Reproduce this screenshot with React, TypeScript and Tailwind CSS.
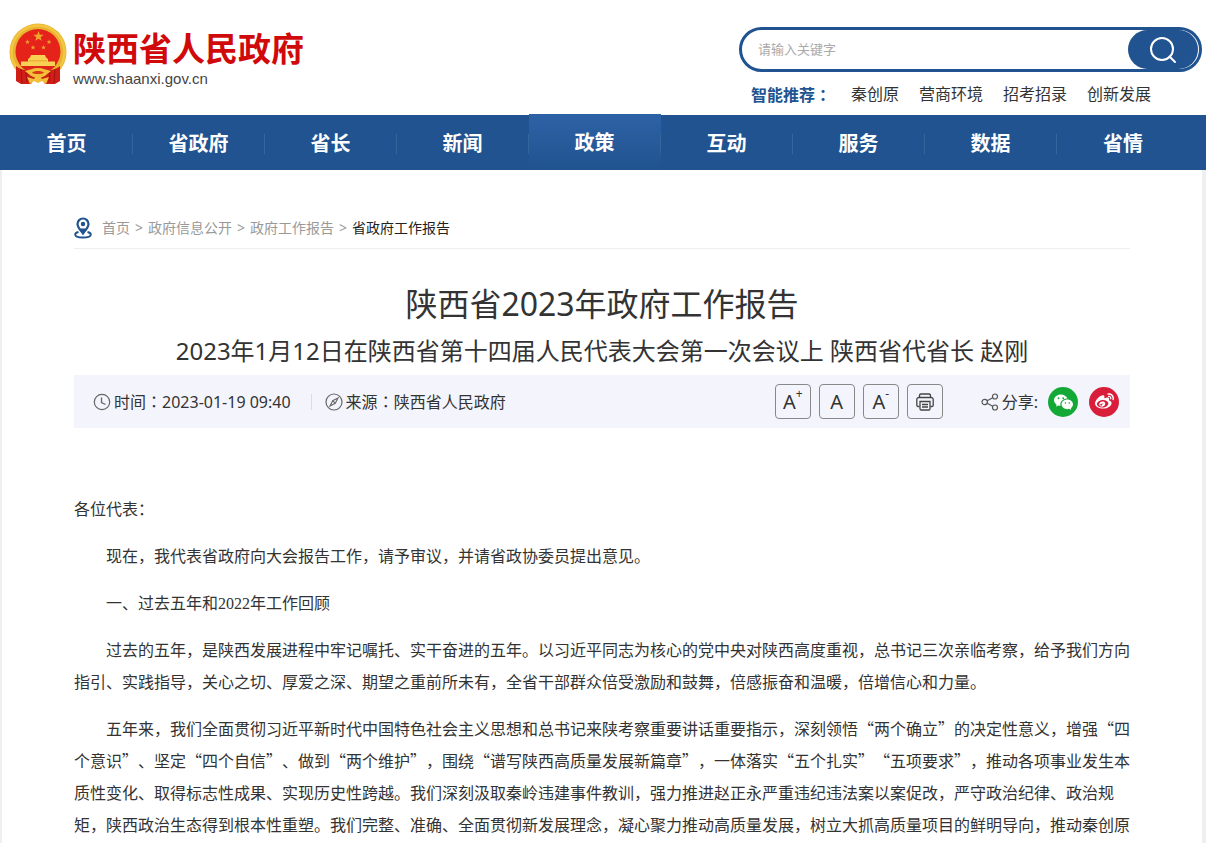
import React from "react";
import { BsWechat } from "react-icons/bs";
import { FaWeibo } from "react-icons/fa";

const uiFont = "font-['Noto_Sans','Noto_Sans_CJK_SC',sans-serif]";

const keywords = ["秦创原", "营商环境", "招考招录", "创新发展"];
const navItems = ["首页", "省政府", "省长", "新闻", "政策", "互动", "服务", "数据", "省情"];
const activeItem = "政策";
const crumbs = ["首页", "政府信息公开", "政府工作报告"];

const starPath = "M0 -1L0.25 -0.32L0.95 -0.31L0.39 0.12L0.59 0.81L0 0.4L-0.59 0.81L-0.39 0.12L-0.95 -0.31L-0.25 -0.32Z";

function Colon() {
  return <span lang="zh-TW" className="font-['Noto_Sans_CJK_TC',sans-serif]">：</span>;
}

function Emblem() {
  return (
    <svg viewBox="0 0 58 62" className="h-[62px] w-[58px] shrink-0" aria-hidden="true">
      <circle cx="29" cy="29" r="28.5" fill="#e9b32f" />
      <circle cx="29" cy="29" r="26.5" fill="none" stroke="#f3c644" strokeWidth="2.5" />
      <ellipse cx="29" cy="28.500" rx="22.500" ry="22.500" fill="#e5231a" />
      <g fill="#eda52d">
        <path d={starPath} transform="translate(29.500 13.500) scale(5.4)" />
        <path d={starPath} transform="translate(18.500 19) scale(2.600)" />
        <path d={starPath} transform="translate(40 19) scale(2.600)" />
        <path d={starPath} transform="translate(24 24.500) scale(2.600)" />
        <path d={starPath} transform="translate(34.500 24.500) scale(2.600)" />
      </g>
      <path d="M22 32H36L37 34.500L39 36V38.500H46V43H12V38.500H19V36L21 34.500Z" fill="#f8d152" />
      <path d="M20 37.800H38" stroke="#e59a25" strokeWidth="0.800" />
      <path d="M12 43H46C43 46 40 47 36 47L29 45L22 47C18 47 15 46 12 43Z" fill="#dd2418" />
      <path d="M7 43C12 47 17 48 22 47L27 53L22 61H12L7 58Z" fill="#d01d17" />
      <path d="M51 43C46 47 41 48 36 47L31 53L36 61H46L51 58Z" fill="#d01d17" />
      <path d="M12 46L13 60M46 46L45 60M17 49L18 59M41 49L40 59" stroke="#a21310" strokeWidth="1" />
      <path d="M16 48C21 47 24 45 29 45S37 47 42 48C38 51 35 55 29 55S20 51 16 48Z" fill="#f1bf38" />
      <path d="M23 49.500C26 47.500 32 47.500 35 49.500C33 51.500 25 51.500 23 49.500Z" fill="#d83a17" />
      <path d="M18 54L25 56H33L40 54L37 61L33 58L29 60L25 58L21 61Z" fill="#f1bf38" />
    </svg>
  );
}

function PinIcon() {
  return (
    <svg viewBox="0 0 18 22" className="h-[22px] w-[18px]" fill="none" stroke="#20538f" aria-hidden="true">
      <path d="M9 16.500C6 12.500 3.500 10.200 3.500 7a5.500 5.500 0 0 1 11 0C14.500 10.200 12 12.500 9 16.500Z" strokeWidth="2.200" />
      <path d="M6 11.500H12L9 16Z" fill="#20538f" stroke="none" />
      <circle cx="9" cy="7" r="2.200" fill="#20538f" stroke="none" />
      <path d="M4.500 15C2.500 15.500 1.200 16.300 1.200 17.500C1.200 19.400 4.500 20.500 9 20.500S16.800 19.400 16.800 17.500C16.800 16.300 15.500 15.500 13.500 15" strokeWidth="1.900" />
    </svg>
  );
}

function ClockIcon() {
  return (
    <svg viewBox="0 0 18 18" className="size-[18px]" fill="none" stroke="#666" aria-hidden="true">
      <circle cx="9" cy="9" r="7.700" strokeWidth="1.200" />
      <path d="M8.500 4.500V9.500L12.500 11.500" strokeWidth="1.300" />
    </svg>
  );
}

function CompassIcon() {
  return (
    <svg viewBox="0 0 18 18" className="size-[18px]" fill="none" stroke="#666" aria-hidden="true">
      <circle cx="9" cy="9" r="8" strokeWidth="1.200" />
      <path d="M13 5L10.300 10.300L5 13L7.700 7.700Z M7.700 7.700L10.300 10.300" strokeWidth="1.100" />
    </svg>
  );
}

function PrinterIcon() {
  return (
    <svg viewBox="0 0 18 18" className="size-[18px]" fill="none" stroke="#444" strokeWidth="1.300" aria-hidden="true">
      <path d="M3.500 4.500V2.500A1.500 1.500 0 0 1 5 1H13A1.500 1.500 0 0 1 14.500 2.500V4.500" />
      <path d="M3.500 13.500H2A1.200 1.200 0 0 1 0.800 12.300V6.500A2 2 0 0 1 2.800 4.500H15.200A2 2 0 0 1 17.200 6.500V12.300A1.200 1.200 0 0 1 16 13.500H14.500" />
      <path d="M4 8.500H14V15.800A1.200 1.200 0 0 1 12.800 17H5.200A1.200 1.200 0 0 1 4 15.800ZM6 11.500H12M6 14H12" />
    </svg>
  );
}

function ShareIcon() {
  return (
    <svg viewBox="0 0 18 18" className="size-[18px]" fill="none" stroke="#555" strokeWidth="1.200" aria-hidden="true">
      <circle cx="3.700" cy="9" r="2.700" />
      <circle cx="14" cy="3.500" r="2.500" />
      <circle cx="14" cy="14.500" r="2.500" />
      <path d="M6.200 7.700L11.700 4.700M6.200 10.300L11.700 13.300" />
    </svg>
  );
}

function ToolButton({ label, children }: { label: string; children: React.ReactNode }) {
  return (
    <button
      type="button"
      aria-label={label}
      className="flex h-[35px] w-9 items-center justify-center rounded border border-[#888] text-xl leading-none text-[#333]"
    >
      {children}
    </button>
  );
}

export default function App() {
  return (
    <div lang="zh-CN" className={`min-h-screen bg-[#efefef] text-[#333] ${uiFont}`}>
      <header className="flex h-[115px] justify-between bg-white pr-1 pl-[9px]">
        <a href="#" className="flex items-start gap-1.5 pt-[23px]">
          <Emblem />
          <span className="flex flex-col pt-1">
            <span className="text-[33px] leading-[44px] font-bold text-[#d00a0a]">陕西省人民政府</span>
            <span className="font-['Liberation_Sans',sans-serif] text-[15px] leading-4 text-[#444]">www.shaanxi.gov.cn</span>
          </span>
        </a>
        <div className="w-[463px] pt-[27px]">
          <form className="flex h-[45px] rounded-full border-3 border-[#20538f] bg-white" onSubmit={(e) => e.preventDefault()}>
            <input
              type="text"
              aria-label="请输入关键字"
              placeholder="请输入关键字"
              className="min-w-0 flex-1 bg-transparent pl-4 text-[13px] outline-none placeholder:text-[#aaa]"
            />
            <button type="submit" aria-label="搜索" className="mr-px flex h-[39px] w-[70px] items-center justify-center rounded-full bg-[#20538f]">
              <svg viewBox="0 0 28 28" className="size-7" fill="none" stroke="#fff" strokeWidth="2" aria-hidden="true">
                <circle cx="13" cy="13" r="11" />
                <path d="M20.500 20.500L26 26" strokeLinecap="round" />
              </svg>
            </button>
          </form>
          <div className="flex pt-[10px] pl-3 text-base leading-6">
            <span className="mr-5 font-bold text-[#20538f]">智能推荐<Colon /></span>
            <span className="flex gap-5">
              {keywords.map((k) => (
                <a key={k} href="#">{k}</a>
              ))}
            </span>
          </div>
        </div>
      </header>

      <nav className="flex h-[55px] bg-[#20538f] pr-[17px] pl-px">
        {navItems.map((item) => (
          <a
            key={item}
            href="#"
            className={
              item === activeItem
                ? "-mt-px flex flex-1 items-center justify-center bg-linear-to-b from-[#2d62a6] to-[#20538f] pt-0.5 text-xl font-bold text-white"
                : "flex flex-1 items-center justify-center pt-0.5 text-xl font-bold text-white"
            }
          >
            <span className="flex-1 text-center">{item}</span>
            {item !== "省情" && <span className="h-5 w-px bg-[#34659c]" />}
          </a>
        ))}
      </nav>

      <main className="mr-1 ml-0.5 min-h-[673px] bg-white px-[72px] pt-[42px]">
        <div className="flex h-[37px] items-center gap-[10px] border-b border-[#eee] pb-1 text-sm text-[#999]">
          <PinIcon />
          <div className="flex gap-[5px]">
            {crumbs.map((c) => (
              <React.Fragment key={c}>
                <a href="#">{c}</a>
                <span>&gt;</span>
              </React.Fragment>
            ))}
            <span className="text-[#222]">省政府工作报告</span>
          </div>
        </div>

        <h1 className="pt-[31px] text-center text-[32px] leading-[48px]">陕西省2023年政府工作报告</h1>
        <h2 className="pb-px text-center text-2xl leading-[46px]">2023年1月12日在陕西省第十四届人民代表大会第一次会议上 陕西省代省长 赵刚</h2>

        <div className="flex h-[53px] items-center justify-between bg-[#f4f5fc] pr-[11px] pl-[19px] text-base">
          <div className="flex items-center">
            <ClockIcon />
            <span className="ml-[3px]">时间<Colon />2023-01-19 09:40</span>
            <span className="mr-[13px] ml-5 h-4 w-px bg-[#ddd]" />
            <CompassIcon />
            <span className="ml-[3px]">来源<Colon />陕西省人民政府</span>
          </div>
          <div className="flex items-center">
            <div className="flex gap-2">
              <ToolButton label="放大字体">A<sup className="-top-2 text-xs leading-none">+</sup></ToolButton>
              <ToolButton label="默认字体">A</ToolButton>
              <ToolButton label="缩小字体">A<sup className="-top-2 text-xs leading-none">-</sup></ToolButton>
              <ToolButton label="打印"><PrinterIcon /></ToolButton>
            </div>
            <div className="ml-[38px] flex items-center">
              <ShareIcon />
              <span className="ml-[3px]">分享:</span>
            </div>
            <div className="ml-[10px] flex gap-[11px]">
              <a href="#" aria-label="微信" className="flex size-[30px] items-center justify-center rounded-full bg-[#14a937] text-white">
                <BsWechat className="size-[19px]" />
              </a>
              <a href="#" aria-label="微博" className="flex size-[30px] items-center justify-center rounded-full bg-[#d81e3a] text-white">
                <FaWeibo className="size-[19px]" />
              </a>
            </div>
          </div>
        </div>

        <article className="flex flex-col gap-[15px] pt-16 font-['Noto_Sans_CJK_SC',sans-serif] text-base leading-8 [text-spacing-trim:space-all]">
          <p>各位代表：</p>
          <p className="indent-8">现在，我代表省政府向大会报告工作，请予审议，并请省政协委员提出意见。</p>
          <p className="indent-8">一、过去五年和<span className="font-['Liberation_Serif',serif] leading-none">2022</span>年工作回顾</p>
          <p className="indent-8">过去的五年，是陕西发展进程中牢记嘱托、实干奋进的五年。以习近平同志为核心的党中央对陕西高度重视，总书记三次亲临考察，给予我们方向指引、实践指导，关心之切、厚爱之深、期望之重前所未有，全省干部群众倍受激励和鼓舞，倍感振奋和温暖，倍增信心和力量。</p>
          <p className="indent-8">五年来，我们全面贯彻习近平新时代中国特色社会主义思想和总书记来陕考察重要讲话重要指示，深刻领悟“两个确立”的决定性意义，增强“四个意识”、坚定“四个自信”、做到“两个维护”，围绕“谱写陕西高质量发展新篇章”，一体落实“五个扎实”“五项要求”，推动各项事业发生本质性变化、取得标志性成果、实现历史性跨越。我们深刻汲取秦岭违建事件教训，强力推进赵正永严重违纪违法案以案促改，严守政治纪律、政治规矩，陕西政治生态得到根本性重塑。我们完整、准确、全面贯彻新发展理念，凝心聚力推动高质量发展，树立大抓高质量项目的鲜明导向，推动秦创原</p>
        </article>
      </main>
    </div>
  );
}
